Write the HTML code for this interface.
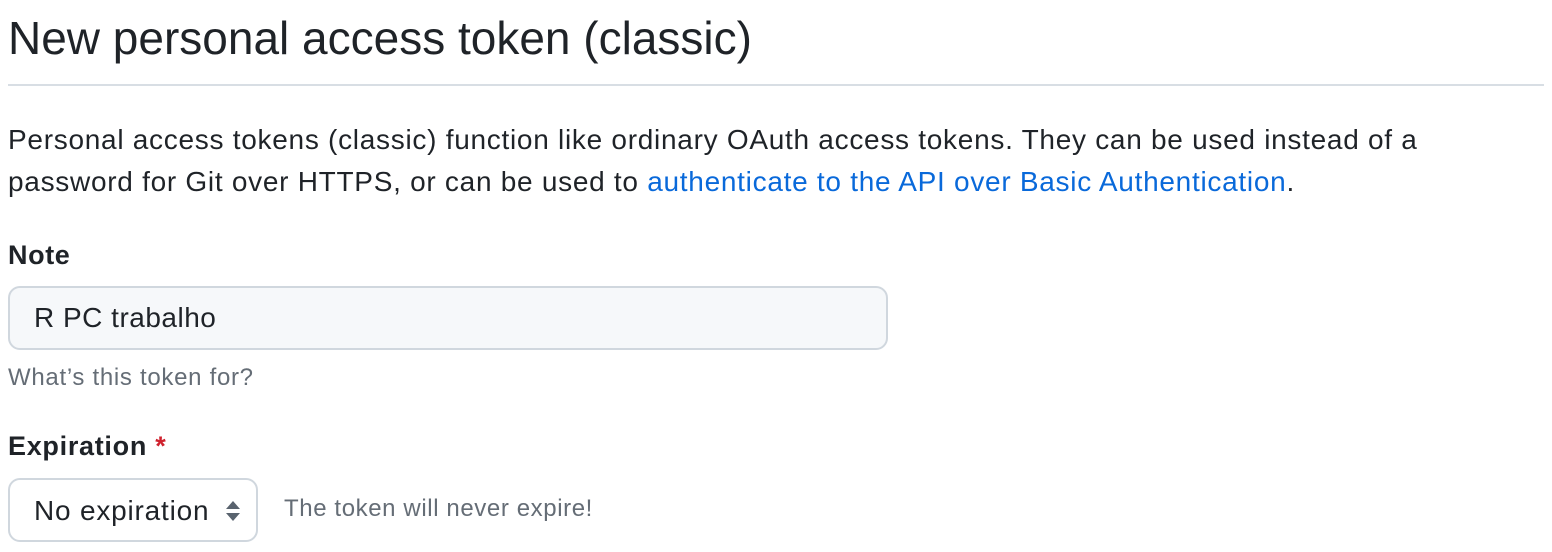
<!DOCTYPE html>
<html><head><style>
body{margin:0;width:1552px;height:552px;background:#fff;font-family:"Liberation Sans",sans-serif;color:#1f2328;position:relative;overflow:hidden}
.a{position:absolute;white-space:nowrap}
</style></head><body>
<div class="a" style="left:8px;top:10px;font-size:46px;line-height:56px">New personal access token (classic)</div>
<div class="a" style="left:8px;top:84px;width:1536px;height:2px;background:#d8dee4"></div>
<div class="a" style="left:8px;top:119px;font-size:28px;letter-spacing:0.72px;line-height:42px">Personal access tokens (classic) function like ordinary OAuth access tokens. They can be used instead of a<br>password for Git over HTTPS, or can be used to <span style="color:#0969da">authenticate to the API over Basic Authentication</span>.</div>
<div class="a" style="left:8px;top:237px;font-size:27px;letter-spacing:0.6px;font-weight:bold;line-height:36px">Note</div>
<div class="a" style="left:8px;top:286px;width:876px;height:60px;border:2px solid #d0d7de;border-radius:12px;background:#f6f8fa"></div>
<div class="a" style="left:34px;top:300px;font-size:28px;letter-spacing:0.5px;line-height:36px">R PC trabalho</div>
<div class="a" style="left:8px;top:362px;font-size:24px;letter-spacing:0.7px;color:#656d76;line-height:32px">What’s this token for?</div>
<div class="a" style="left:8px;top:428px;font-size:27px;letter-spacing:0.7px;font-weight:bold;line-height:36px">Expiration <span style="color:#cf222e">*</span></div>
<div class="a" style="left:8px;top:478px;width:246px;height:60px;border:2px solid #d0d7de;border-radius:12px;background:#fff"></div>
<div class="a" style="left:34px;top:493px;font-size:28px;letter-spacing:0.8px;line-height:36px">No expiration</div>
<svg class="a" style="left:224px;top:500px" width="18" height="22" viewBox="0 0 18 22"><path d="M9 1L16 9H2Z M9 21L16 13H2Z" fill="#59636e"/></svg>
<div class="a" style="left:284px;top:493px;font-size:24px;letter-spacing:0.6px;color:#656d76;line-height:32px">The token will never expire!</div>
</body></html>
